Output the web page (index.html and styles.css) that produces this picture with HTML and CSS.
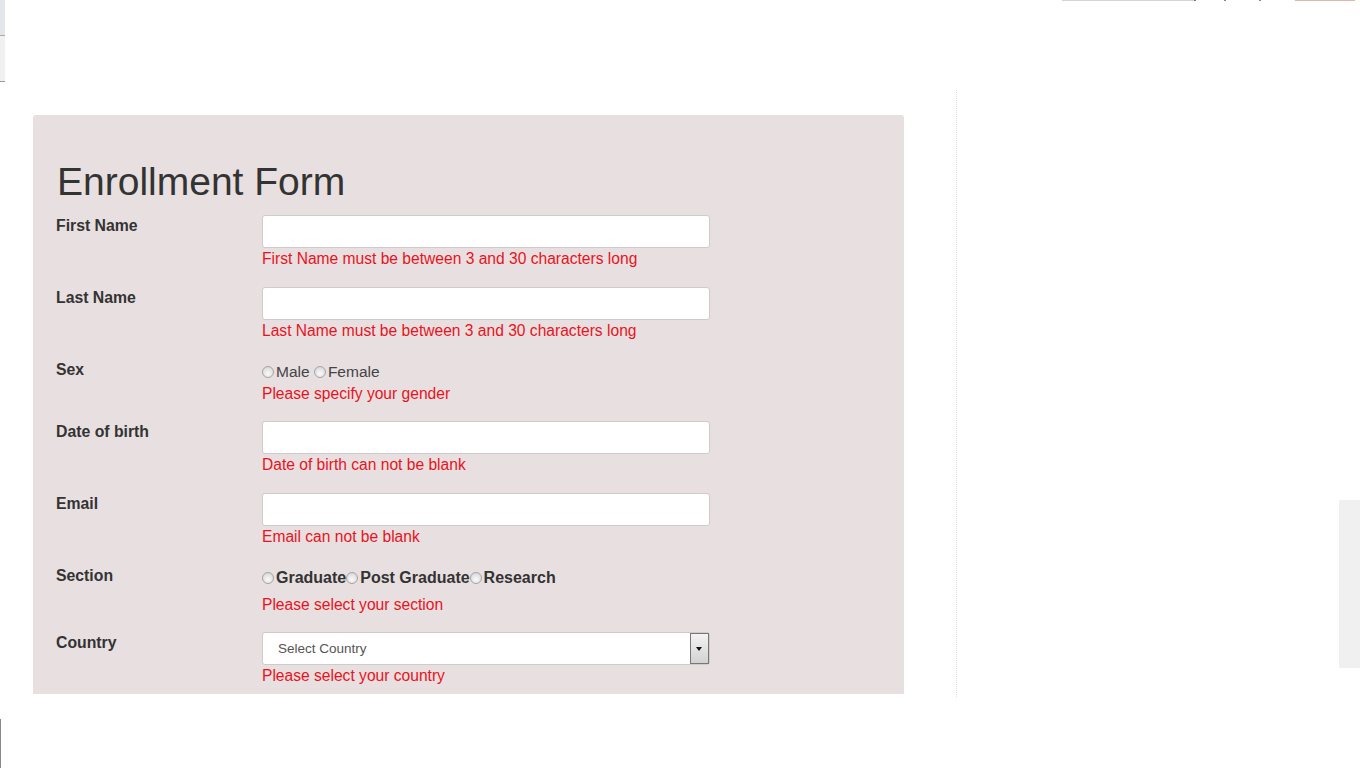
FILE: index.html
```html
<!DOCTYPE html>
<html>
<head>
<meta charset="utf-8">
<link rel="stylesheet" href="styles.css">
</head>
<body>
<div class="edge-tl"><div class="tl-a"></div><div class="tl-b"></div></div>
<div class="edge-top"><span class="t1"></span><span class="t2"></span><span class="t3"></span><span class="t4"></span><span class="t5"></span></div>
<div class="side-right"></div>
<div class="edge-bl"></div>
<div class="divider"></div>
<main class="page">
  <section class="panel">
    <h1 class="title">Enrollment Form</h1>
    <div class="row">
      <div class="label">First Name</div>
      <div class="field"><div class="input"></div><div class="err">First Name must be between 3 and 30 characters long</div></div>
    </div>
    <div class="row">
      <div class="label">Last Name</div>
      <div class="field"><div class="input"></div><div class="err">Last Name must be between 3 and 30 characters long</div></div>
    </div>
    <div class="row row-sex">
      <div class="label">Sex</div>
      <div class="field"><div class="radios"><span class="radio"></span>Male <span class="radio"></span>Female</div><div class="err">Please specify your gender</div></div>
    </div>
    <div class="row">
      <div class="label">Date of birth</div>
      <div class="field"><div class="input"></div><div class="err">Date of birth can not be blank</div></div>
    </div>
    <div class="row">
      <div class="label">Email</div>
      <div class="field"><div class="input"></div><div class="err">Email can not be blank</div></div>
    </div>
    <div class="row row-section">
      <div class="label">Section</div>
      <div class="field"><div class="radios bold"><span class="radio"></span>Graduate<span class="radio"></span>Post Graduate<span class="radio"></span>Research</div><div class="err err-section">Please select your section</div></div>
    </div>
    <div class="row">
      <div class="label">Country</div>
      <div class="field"><div class="select"><span>Select Country</span><span class="arrow"></span></div><div class="err">Please select your country</div></div>
    </div>
  </section>
</main>
</body>
</html>
```
FILE: styles.css
```css
html, body { margin: 0; padding: 0; background: #fff; }
body { width: 1360px; height: 768px; overflow: hidden; position: relative; font-family: "Liberation Sans", Arial, sans-serif; }

.edge-tl { position: absolute; left: 0; top: 0; width: 5px; }
.tl-a { height: 35px; background: #e3e7ec; border-bottom: 1px solid #aaa; }
.tl-b { height: 45px; background: #f1f1f1; border-bottom: 1px solid #999; }

.edge-top { position: absolute; top: 0; left: 1062px; height: 1px; display: flex; }
.edge-top span { height: 1px; display: block; }
.t1 { width: 132px; background: #d4d4d4; }
.t2 { width: 2px; background: #777; margin-right: 28px; }
.t3 { width: 2px; background: #888; margin-right: 33px; }
.t4 { width: 2px; background: #888; margin-right: 34px; }
.t5 { width: 60px; background: #e3b4aa; }

.side-right { position: absolute; left: 1339px; top: 500px; width: 21px; height: 168px; background: #f0f0f0; }
.edge-bl { position: absolute; left: 0; top: 719px; width: 1px; height: 49px; background: #888; }
.divider { position: absolute; left: 956px; top: 90px; height: 607px; border-left: 1px dotted #ddd; }

.page { padding: 115px 0 0 33px; }
.panel {
  width: 871px; height: 579px; box-sizing: border-box;
  background: #e8dfe0; border-radius: 3px 3px 0 0;
  padding: 42px 24px 0 23px;
  color: #333;
}
.title { margin: 0 0 8px 1px; font-size: 39px; font-weight: normal; line-height: 50px; color: #333; letter-spacing: 0; }

.row { display: flex; height: 72px; }
.label { width: 206px; flex: none; font-weight: bold; font-size: 15.8px; line-height: 20px; padding-top: 1px; color: #333; }
.field { width: 448px; }
.input { height: 31px; background: #fff; border: 1px solid #d0cacb; border-radius: 3px; }
.err { color: #e8131d; font-size: 15.6px; line-height: 20px; margin-top: 1px; }

.row-sex { height: 62px; }
.row-sex .radios { height: 22px; padding-top: 2px; font-size: 15.5px; }
.radios { font-size: 16px; line-height: 20px; color: #444; display: flex; align-items: center; white-space: pre; }
.radios.bold { font-weight: bold; color: #333; }
.radio { display: inline-block; width: 12px; height: 12px; box-sizing: border-box; border-radius: 50%; border: 1px solid #a5a5a5; background: radial-gradient(circle at 50% 65%, #fafafa 0%, #ddd 70%, #c8c8c8 100%); margin-right: 2px; }

.row-section { height: 67px; }
.row-section .radios { padding-top: 3px; }
.err-section { margin-top: 7px; }

.select { position: relative; height: 31px; background: #fff; border: 1px solid #d0cacb; border-radius: 3px; display: flex; align-items: center; font-size: 13.5px; color: #555; padding-left: 15px; }
.arrow { position: absolute; right: 0; top: 0; width: 17px; height: 29px; border: 1px solid #777; background: linear-gradient(#f4f4f4, #d2d2d2); }
.arrow::after { content: ""; position: absolute; left: 5px; top: 13px; border-left: 3.5px solid transparent; border-right: 3.5px solid transparent; border-top: 4px solid #111; }
```
